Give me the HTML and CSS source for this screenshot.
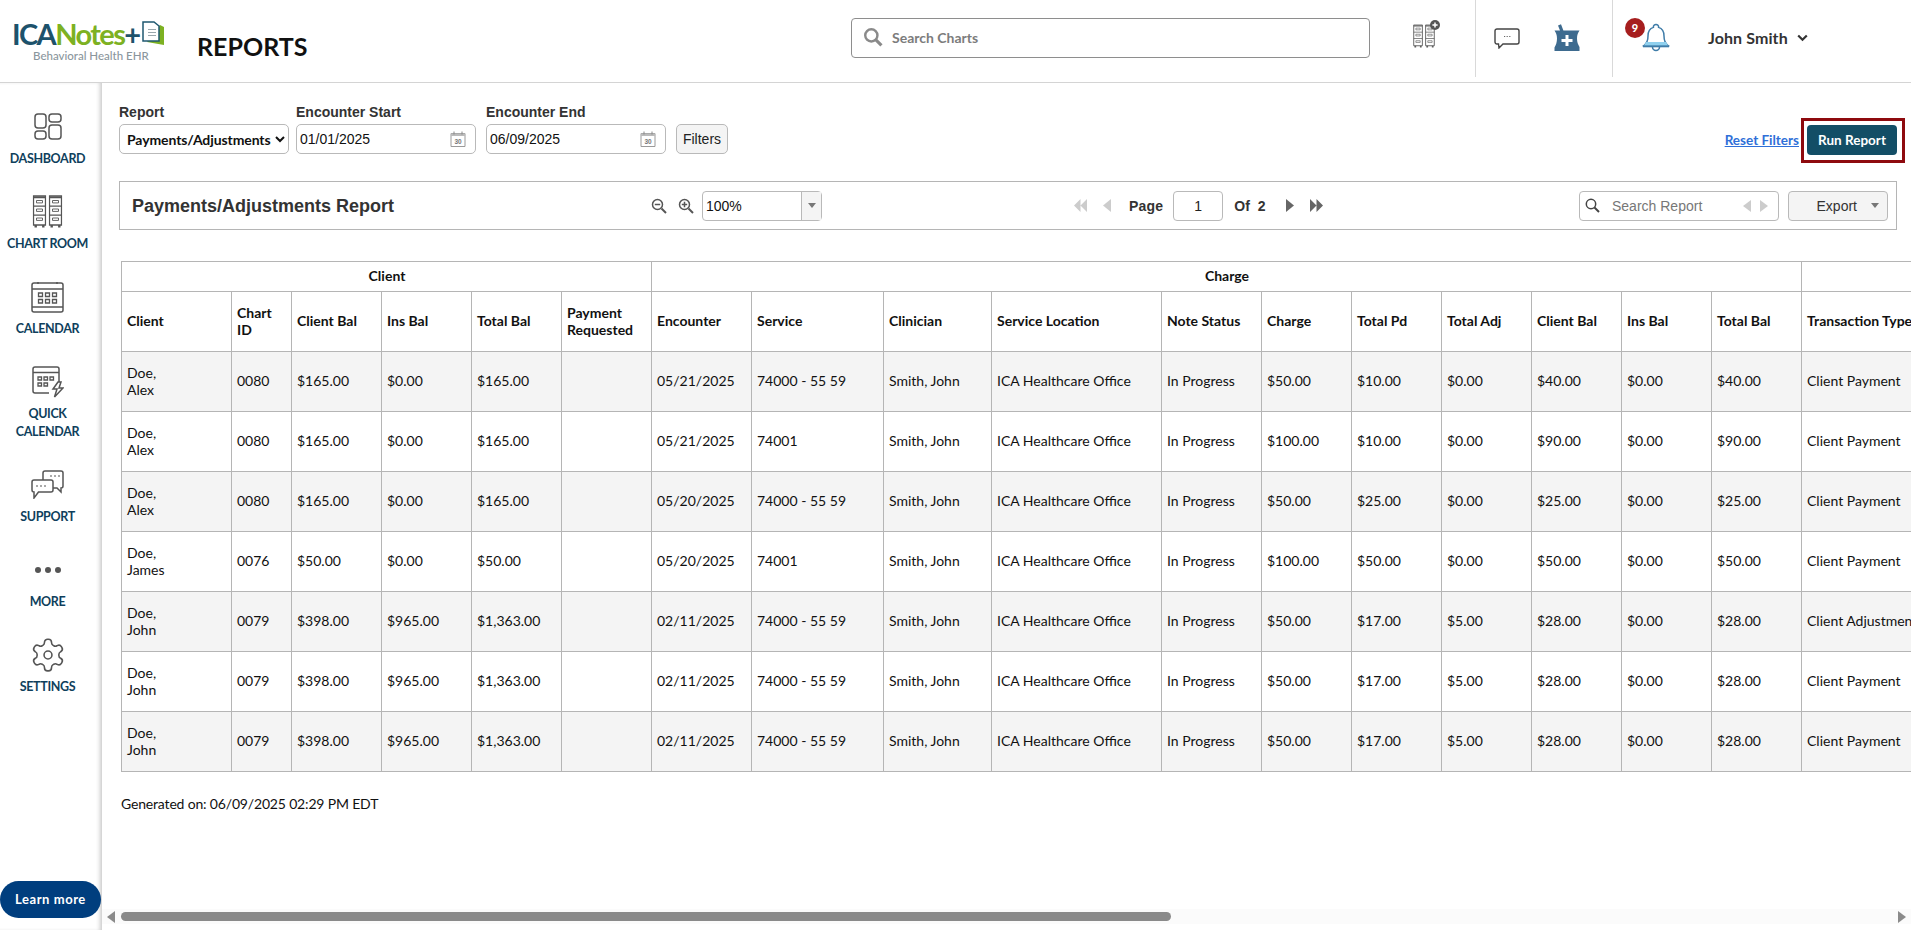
FILE: index.html
```html
<!DOCTYPE html>
<html lang="en">
<head>
<meta charset="utf-8">
<title>Reports</title>
<link rel="stylesheet" href="styles.css">
</head>
<body>
<svg class="defs" width="0" height="0" aria-hidden="true">
  <defs>
    <symbol id="cab" viewBox="0 0 14 33">
      <path d="M1 1h12v29H1z" fill="none" stroke="currentColor" stroke-width="1.3"/>
      <path d="M1 1.600h12v1.600H1zM1 10.500h12v1.200H1zM1 19.500h12v1.200H1zM2 30h2.400v2.400H2zM9.600 30H12v2.400H9.600z" fill="currentColor"/>
      <path d="M4 5.500h6v2.400H4zM4 14h6v2.400H4zM4 23h6v2.400H4z" fill="none" stroke="currentColor" stroke-width=".9"/>
    </symbol>
    <symbol id="cal30" viewBox="0 0 16 16">
      <path d="M1 2.500h14v13H1z" fill="#fff" stroke="#9a9a9a"/>
      <path d="M1 2.500h14v2.500H1z" fill="#bbb"/>
      <path d="M4 .5v3M12 .5v3" stroke="#888"/>
      <text x="8" y="13" text-anchor="middle" class="cal-num">30</text>
    </symbol>
  </defs>
</svg>

<header class="topbar">
  <div class="brand">
    <div class="logo">
      <div class="logo-row">
        <span class="logo-ica">ICA</span><span class="logo-notes">Notes</span><span class="logo-plus">+</span>
        <svg class="logo-doc" width="24" height="25" viewBox="0 0 24 25">
          <path d="M6 21l17 3V6l-4-2z" fill="#7db122"/>
          <path d="M2 1h11l5 4v15H2z" fill="#fff" stroke="#1f5870" stroke-width="1.500"/>
          <path d="M7 8.500h8M7 11.500h8M7 14.500h8" stroke="#9aa7ad" stroke-width="1.200"/>
        </svg>
      </div>
      <div class="logo-sub">Behavioral Health EHR</div>
    </div>
  </div>
  <div class="page-title">REPORTS</div>
  <div class="search-cell">
    <div class="chart-search">
      <svg width="20" height="20" viewBox="0 0 18 18"><circle cx="7.500" cy="7.500" r="5.500" fill="none" stroke="#8a8a8a" stroke-width="2.200"/><path d="M11.600 11.600l5 5" stroke="#8a8a8a" stroke-width="2.800"/></svg>
      <span>Search Charts</span>
    </div>
  </div>
  <div class="tool-cell tool-add">
    <div class="add-chart">
      <svg class="cab-pair" width="22" height="25" viewBox="0 0 24 27">
        <use href="#cab" x="0" y="0" width="11" height="26"/>
        <use href="#cab" x="13" y="0" width="11" height="26"/>
      </svg>
      <svg class="add-dot" width="10" height="10" viewBox="0 0 10 10"><circle cx="5" cy="5" r="5" fill="#555"/><path d="M2.400 5h5.200M5 2.400v5.200" stroke="#fff" stroke-width="1.500"/></svg>
    </div>
  </div>
  <div class="tool-cell tool-mid">
    <svg width="26" height="21" viewBox="0 0 26 21"><path d="M3 1h20a2 2 0 0 1 2 2v11a2 2 0 0 1-2 2H9l-4 4-.5-4H3a2 2 0 0 1-2-2V3a2 2 0 0 1 2-2z" fill="#fff" stroke="#444" stroke-width="1.400"/><path d="M10 8.500h1.200M12.600 8.500h1.200M15.200 8.500h1.200" stroke="#666"/></svg>
    <svg class="mortar" width="26" height="28" viewBox="0 0 26 28"><path d="M4 1.500l3-1.200 2.400 6.200h16.100c-1.500 2.200-2.500 4.500-2.500 8s1 6 2.500 8.500V27H.5v-3.500C2 21 3 18 3 14.500S2 8.700.5 6.500H6z" fill="#3e6b8f"/><path d="M13 11v11M7.500 16.500h11" stroke="#fff" stroke-width="3"/></svg>
  </div>
  <div class="tool-user">
    <div class="bell-wrap">
      <svg width="28" height="29" viewBox="0 0 28 29"><path d="M14 1.500a2.600 2.600 0 0 1 2.600 2.900c4 1.200 5.400 4.400 5.400 8.600 0 5 1.200 7.500 4 9.500H2c2.800-2 4-4.500 4-9.500 0-4.200 1.400-7.400 5.400-8.600A2.600 2.600 0 0 1 14 1.500z" fill="#fff" stroke="#3f7ca8" stroke-width="1.500"/><path d="M4 19h20l2 3.500H2z" fill="#8fd0ee"/><path d="M1 23.500h26" stroke="#3f7ca8" stroke-width="1.600"/><path d="M10.500 24a3.500 3.500 0 0 0 7 0" fill="none" stroke="#3f7ca8" stroke-width="1.500"/></svg>
      <span class="badge">9</span>
    </div>
    <span class="user-name">John Smith</span>
    <svg class="user-caret" width="11" height="8" viewBox="0 0 11 8"><path d="M1.200 1.500l4.300 4.300 4.300-4.300" fill="none" stroke="#333" stroke-width="2.200"/></svg>
  </div>
</header>

<div class="shell">
  <aside class="sidebar">
    <nav class="nav">
      <a class="nav-item">
        <span class="nav-icon">
          <svg width="28" height="27" viewBox="0 0 28 27" fill="none" stroke="#555" stroke-width="1.500"><rect x="1" y="1" width="11" height="14" rx="3"/><rect x="15" y="1" width="12" height="8" rx="3"/><rect x="1" y="18" width="11" height="8" rx="3"/><rect x="15" y="12" width="12" height="14" rx="3"/></svg>
        </span>
        <span class="nav-label">DASHBOARD</span>
      </a>
      <a class="nav-item">
        <span class="nav-icon cab-icon">
          <svg width="31" height="33" viewBox="0 0 30 33"><use href="#cab" x="0" y="0" width="14" height="33"/><use href="#cab" x="16" y="0" width="14" height="33"/></svg>
        </span>
        <span class="nav-label">CHART ROOM</span>
      </a>
      <a class="nav-item">
        <span class="nav-icon">
          <svg width="33" height="32" viewBox="0 0 33 32" fill="none" stroke="#555" stroke-width="1.500"><rect x="1" y="2" width="31" height="29" rx="2"/><path d="M1 8h31M1 26h31M7 1v2M26 1v2"/><path d="M7.500 12h4v3.500h-4zM14.500 12h4v3.500h-4zM21.500 12h4v3.500h-4zM7.500 18.500h4V22h-4zM14.500 18.500h4V22h-4zM21.500 18.500h4V22h-4z" stroke-width="1.300"/></svg>
        </span>
        <span class="nav-label">CALENDAR</span>
      </a>
      <a class="nav-item">
        <span class="nav-icon">
          <svg width="32" height="32" viewBox="0 0 32 32" fill="none" stroke="#555" stroke-width="1.500"><path d="M17 27H3a2 2 0 0 1-2-2V3a2 2 0 0 1 2-2h22a2 2 0 0 1 2 2v14"/><path d="M1 6.500h26"/><path d="M6 11h3.500v3H6zM12 11h3.500v3H12zM18 11h3.500v3H18zM6 17h3.500v3H6zM12 17h3.500v3H12z" stroke-width="1.300"/><path d="M26 16l-5 7h4l-2.500 8L31 22h-4l2-6z" fill="#fff"/></svg>
        </span>
        <span class="nav-label">QUICK<br>CALENDAR</span>
      </a>
      <a class="nav-item">
        <span class="nav-icon">
          <svg width="33" height="29" viewBox="0 0 33 29" fill="none" stroke="#555" stroke-width="1.500"><path d="M12 10V3a2 2 0 0 1 2-2h16a2 2 0 0 1 2 2v13a2 2 0 0 1-2 2v4l-4-4h-4"/><path d="M3 10h17a2 2 0 0 1 2 2v8a2 2 0 0 1-2 2H7.500L3 28v-6a2 2 0 0 1-2-2v-8a2 2 0 0 1 2-2z" fill="#fff"/><path d="M19 6h2M23 6h2M27 6h2M5 16h2M9 16h2M13 16h2" stroke-width="1.200"/></svg>
        </span>
        <span class="nav-label">SUPPORT</span>
      </a>
      <a class="nav-item">
        <span class="nav-icon">
          <svg width="30" height="8" viewBox="0 0 30 8" fill="#555"><circle cx="5" cy="4" r="3"/><circle cx="15" cy="4" r="3"/><circle cx="25" cy="4" r="3"/></svg>
        </span>
        <span class="nav-label">MORE</span>
      </a>
      <a class="nav-item">
        <span class="nav-icon">
          <svg width="38" height="38" viewBox="0 0 24 24" fill="none" stroke="#555" stroke-width="1"><path d="M12.220 2h-.44a2 2 0 0 0-2 2v.18a2 2 0 0 1-1 1.730l-.43.25a2 2 0 0 1-2 0l-.15-.08a2 2 0 0 0-2.730.73l-.22.38a2 2 0 0 0 .73 2.730l.15.1a2 2 0 0 1 1 1.720v.51a2 2 0 0 1-1 1.740l-.15.09a2 2 0 0 0-.73 2.730l.22.38a2 2 0 0 0 2.730.73l.15-.08a2 2 0 0 1 2 0l.43.25a2 2 0 0 1 1 1.730V20a2 2 0 0 0 2 2h.44a2 2 0 0 0 2-2v-.18a2 2 0 0 1 1-1.730l.43-.25a2 2 0 0 1 2 0l.15.08a2 2 0 0 0 2.730-.73l.22-.39a2 2 0 0 0-.73-2.730l-.15-.08a2 2 0 0 1-1-1.740v-.5a2 2 0 0 1 1-1.740l.15-.09a2 2 0 0 0 .73-2.730l-.22-.38a2 2 0 0 0-2.730-.73l-.15.08a2 2 0 0 1-2 0l-.43-.25a2 2 0 0 1-1-1.730V4a2 2 0 0 0-2-2z"/><circle cx="12" cy="12" r="2.500"/></svg>
        </span>
        <span class="nav-label">SETTINGS</span>
      </a>
    </nav>
    <a class="learn-more">Learn more</a>
  </aside>

  <main class="content">
    <div class="scroll-area">
      <div class="filters">
        <div class="field">
          <label class="field-label">Report</label>
          <select class="report-select"><option>Payments/Adjustments</option></select>
        </div>
        <div class="field">
          <label class="field-label">Encounter Start</label>
          <div class="date-box"><span>01/01/2025</span><svg width="16" height="16"><use href="#cal30"/></svg></div>
        </div>
        <div class="field field-end">
          <label class="field-label">Encounter End</label>
          <div class="date-box"><span>06/09/2025</span><svg width="16" height="16"><use href="#cal30"/></svg></div>
        </div>
        <button class="filters-btn">Filters</button>
        <div class="filter-actions">
          <a class="reset-link">Reset Filters</a>
          <div class="run-frame"><button class="run-btn">Run Report</button></div>
        </div>
      </div>

      <section class="viewer-bar">
        <h1 class="viewer-title">Payments/Adjustments Report</h1>
        <div class="zoom-tools">
          <svg width="16" height="16" viewBox="0 0 16 16" fill="none" stroke="#555"><circle cx="6.500" cy="6.500" r="5" stroke-width="1.500"/><path d="M3.800 6.500h5.400" stroke-width="1.500"/><path d="M10.500 10.500l4.500 4.500" stroke-width="2"/></svg>
          <svg width="16" height="16" viewBox="0 0 16 16" fill="none" stroke="#555"><circle cx="6.500" cy="6.500" r="5" stroke-width="1.500"/><path d="M3.800 6.500h5.400M6.500 3.800v5.400" stroke-width="1.500"/><path d="M10.500 10.500l4.500 4.500" stroke-width="2"/></svg>
          <div class="zoom-combo"><span class="zoom-val">100%</span><span class="zoom-drop"><i class="tri-down"></i></span></div>
        </div>
        <div class="pager">
          <svg class="pg-first" width="13" height="13" viewBox="0 0 13 13" fill="#ccc"><path d="M6.500 0v13L0 6.500zM13 0v13L6.500 6.500z"/></svg>
          <svg class="pg-prev" width="8" height="13" viewBox="0 0 8 13" fill="#ccc"><path d="M8 0v13L0 6.500z"/></svg>
          <span class="pg-label pg-page">Page</span>
          <span class="pg-input">1</span>
          <span class="pg-label pg-of">Of</span>
          <span class="pg-label pg-total">2</span>
          <svg class="pg-next" width="8" height="13" viewBox="0 0 8 13" fill="#666"><path d="M0 0v13l8-6.500z"/></svg>
          <svg class="pg-last" width="13" height="13" viewBox="0 0 13 13" fill="#666"><path d="M0 0v13l6.500-6.500zM6.500 0v13L13 6.500z"/></svg>
        </div>
        <div class="viewer-right">
          <div class="report-search">
            <svg width="15" height="15" viewBox="0 0 15 15" fill="none" stroke="#444"><circle cx="6" cy="6" r="4.700" stroke-width="1.500"/><path d="M9.500 9.500l4.500 4.500" stroke-width="2"/></svg>
            <span class="rs-text">Search Report</span>
            <svg width="8" height="12" viewBox="0 0 8 12" fill="#ccc"><path d="M8 0v12L0 6z"/></svg>
            <svg width="8" height="12" viewBox="0 0 8 12" fill="#ccc"><path d="M0 0v12l8-6z"/></svg>
          </div>
          <div class="export-btn"><span>Export</span><i class="tri-down"></i></div>
        </div>
      </section>

      <div class="table-wrap">
        <table class="report-table">
          <colgroup>
            <col class="w110"><col class="w60"><col class="w90"><col class="w90"><col class="w90"><col class="w90">
            <col class="w100"><col class="w132"><col class="w108"><col class="w170"><col class="w100"><col class="w90"><col class="w90"><col class="w90"><col class="w90"><col class="w90"><col class="w90">
            <col class="w150">
          </colgroup>
          <thead>
            <tr class="group-row"><th colspan="6">Client</th><th colspan="11">Charge</th><th></th></tr>
            <tr class="head-row">
              <th>Client</th><th>Chart<br>ID</th><th>Client Bal</th><th>Ins Bal</th><th>Total Bal</th><th>Payment<br>Requested</th>
              <th>Encounter</th><th>Service</th><th>Clinician</th><th>Service Location</th><th>Note Status</th><th>Charge</th><th>Total Pd</th><th>Total Adj</th><th>Client Bal</th><th>Ins Bal</th><th>Total Bal</th><th>Transaction Type</th>
            </tr>
          </thead>
          <tbody>
            <tr><td>Doe,<br>Alex</td><td>0080</td><td>$165.00</td><td>$0.00</td><td>$165.00</td><td></td><td>05/21/2025</td><td>74000 - 55 59</td><td>Smith, John</td><td>ICA Healthcare Office</td><td>In Progress</td><td>$50.00</td><td>$10.00</td><td>$0.00</td><td>$40.00</td><td>$0.00</td><td>$40.00</td><td>Client Payment</td></tr>
            <tr><td>Doe,<br>Alex</td><td>0080</td><td>$165.00</td><td>$0.00</td><td>$165.00</td><td></td><td>05/21/2025</td><td>74001</td><td>Smith, John</td><td>ICA Healthcare Office</td><td>In Progress</td><td>$100.00</td><td>$10.00</td><td>$0.00</td><td>$90.00</td><td>$0.00</td><td>$90.00</td><td>Client Payment</td></tr>
            <tr><td>Doe,<br>Alex</td><td>0080</td><td>$165.00</td><td>$0.00</td><td>$165.00</td><td></td><td>05/20/2025</td><td>74000 - 55 59</td><td>Smith, John</td><td>ICA Healthcare Office</td><td>In Progress</td><td>$50.00</td><td>$25.00</td><td>$0.00</td><td>$25.00</td><td>$0.00</td><td>$25.00</td><td>Client Payment</td></tr>
            <tr><td>Doe,<br>James</td><td>0076</td><td>$50.00</td><td>$0.00</td><td>$50.00</td><td></td><td>05/20/2025</td><td>74001</td><td>Smith, John</td><td>ICA Healthcare Office</td><td>In Progress</td><td>$100.00</td><td>$50.00</td><td>$0.00</td><td>$50.00</td><td>$0.00</td><td>$50.00</td><td>Client Payment</td></tr>
            <tr><td>Doe,<br>John</td><td>0079</td><td>$398.00</td><td>$965.00</td><td>$1,363.00</td><td></td><td>02/11/2025</td><td>74000 - 55 59</td><td>Smith, John</td><td>ICA Healthcare Office</td><td>In Progress</td><td>$50.00</td><td>$17.00</td><td>$5.00</td><td>$28.00</td><td>$0.00</td><td>$28.00</td><td>Client Adjustment</td></tr>
            <tr><td>Doe,<br>John</td><td>0079</td><td>$398.00</td><td>$965.00</td><td>$1,363.00</td><td></td><td>02/11/2025</td><td>74000 - 55 59</td><td>Smith, John</td><td>ICA Healthcare Office</td><td>In Progress</td><td>$50.00</td><td>$17.00</td><td>$5.00</td><td>$28.00</td><td>$0.00</td><td>$28.00</td><td>Client Payment</td></tr>
            <tr><td>Doe,<br>John</td><td>0079</td><td>$398.00</td><td>$965.00</td><td>$1,363.00</td><td></td><td>02/11/2025</td><td>74000 - 55 59</td><td>Smith, John</td><td>ICA Healthcare Office</td><td>In Progress</td><td>$50.00</td><td>$17.00</td><td>$5.00</td><td>$28.00</td><td>$0.00</td><td>$28.00</td><td>Client Payment</td></tr>
          </tbody>
        </table>
      </div>
      <p class="generated">Generated on: 06/09/2025 02:29 PM EDT</p>
    </div>
    <div class="hscroll">
      <svg width="8" height="12" viewBox="0 0 8 12" fill="#8a8a8a"><path d="M8 0v12L0 6z"/></svg>
      <div class="hscroll-track"><div class="hscroll-thumb"></div></div>
      <svg width="8" height="12" viewBox="0 0 8 12" fill="#8a8a8a"><path d="M0 0v12l8-6z"/></svg>
    </div>
  </main>
</div>
</body>
</html>
```
FILE: styles.css
```css
* { box-sizing: border-box; }
html, body { margin: 0; height: 930px; overflow: hidden; background: #fff; }
body { font-family: Lato, "Liberation Sans", sans-serif; color: #111; display: flex; flex-direction: column; }
.defs { position: absolute; }
.cal-num { font: bold 6.5px "Liberation Sans", sans-serif; fill: #777; }

/* top bar */
.topbar {
  height: 83px; flex: none; display: grid;
  grid-template-columns: 197px 654px 519px 106px 137px 1fr;
  border-bottom: 1px solid #d4d4d4;
}
.brand { padding: 21px 0 0 12px; }
.logo-row { display: flex; align-items: flex-start; height: 26px; line-height: 26px; font-size: 29px; font-weight: 700; letter-spacing: -1.6px; }
.logo-ica { color: #1d526b; }
.logo-notes { color: #7db122; }
.logo-plus { color: #1d526b; }
.logo-doc { margin-left: 1px; }
.logo-sub { margin: 1px 0 0 21px; font-size: 11.5px; line-height: 15px; font-weight: 500; color: #8b969d; white-space: nowrap; }
.page-title { padding-top: 31px; font-size: 25px; line-height: 30px; font-weight: 700; color: #111; }
.search-cell { padding-top: 18px; }
.chart-search { height: 40px; border: 1px solid #8e8e8e; border-radius: 4px; display: flex; align-items: center; gap: 9px; padding: 0 0 2px 11px; font-size: 14px; font-weight: 700; color: #7c7c7c; }
.tool-cell { height: 77px; border-right: 1px solid #d9d9d9; display: flex; align-items: center; }
.tool-add { justify-content: flex-start; padding-left: 43px; }
.add-chart { position: relative; width: 27px; height: 30px; padding-top: 4px; color: #5f5f5f; margin-top: -8px; }
.add-dot { position: absolute; right: 0; top: 0; }
.cab-pair { display: block; }
.tool-mid { padding-left: 18px; gap: 33px; }
.mortar { margin: -2px 0 0 1px; }
.tool-user { display: flex; align-items: center; height: 77px; padding-left: 29px; }
.bell-wrap { position: relative; width: 28px; height: 29px; margin-top: -2px; }
.badge { position: absolute; left: -17px; top: -5px; width: 20px; height: 20px; border-radius: 50%; background: #a61e1e; color: #fff; font-size: 11px; line-height: 20px; font-weight: 900; text-align: center; }
.user-name { margin: -2px 0 0 38px; font-size: 16px; font-weight: 700; color: #333; letter-spacing: .1px; }
.user-caret { margin: -2px 0 0 9px; }

/* shell */
.shell { flex: 1; display: flex; min-height: 0; }
.sidebar { width: 102px; flex: none; display: flex; flex-direction: column; padding: 20px 0 12px; box-shadow: inset -4px 0 4px -2px #c9c9c9; }
.nav { display: flex; flex-direction: column; gap: 20px; }
.nav-item { display: flex; flex-direction: column; align-items: center; padding-right: 7px; }
.nav-icon { height: 47px; display: flex; align-items: center; justify-content: center; color: #555; }
.nav-label { font-size: 12.5px; line-height: 18px; font-weight: 700; color: #0f3f5c; text-align: center; letter-spacing: -.35px; white-space: nowrap; }
.learn-more { margin-top: auto; width: 101px; height: 37px; border-radius: 19px; background: #003e7e; color: #fff; font-size: 13px; font-weight: 700; line-height: 37px; text-align: center; letter-spacing: .55px; }

/* content */
.content { flex: 1; min-width: 0; display: flex; flex-direction: column; padding-bottom: 6px; }
.scroll-area { flex: 1; min-height: 0; overflow: hidden; padding: 17px 14px 0 17px; }
.filters { display: flex; align-items: flex-end; height: 54px; gap: 7px; }
.field { display: flex; flex-direction: column; }
.field-end { margin-left: 3px; }
.field-label { font: bold 14px/24px "Liberation Sans", sans-serif; color: #333; height: 24px; }
.report-select { width: 170px; height: 30px; border: 1px solid #b9b9b9; border-radius: 5px; background: #fff; font: 700 14px Lato, sans-serif; letter-spacing: -.1px; color: #111; padding-left: 3px; }
.date-box { width: 180px; height: 30px; border: 1px solid #b9b9b9; border-radius: 5px; display: flex; align-items: center; justify-content: space-between; padding: 0 9px 0 3px; font: 14px "Liberation Sans", sans-serif; color: #111; }
.filters-btn { margin-left: 3px; width: 52px; height: 30px; border: 1px solid #b9b9b9; border-radius: 5px; background: #f4f4f4; font: 14px "Liberation Sans", sans-serif; color: #222; padding: 0; }
.filter-actions { margin-left: auto; display: flex; align-items: center; gap: 2px; margin-bottom: -1px; }
.reset-link { font-size: 13.5px; font-weight: 700; color: #2f6fd8; text-decoration: underline; }
.run-frame { border: 3px solid #8e0a0e; padding: 4px 5px 5px 3px; margin: -7px -8px -8px 0; }
.run-btn { display: block; width: 90px; height: 30px; border: 0; border-radius: 4px; background: #134e66; color: #fff; font: 700 13.5px Lato, sans-serif; padding: 0; }

.viewer-bar { margin-top: 27px; height: 49px; border: 1px solid #b5b5b5; display: grid; grid-template-columns: 519px 423px auto 1fr; align-items: center; padding-left: 12px; }
.viewer-title { margin: 2px 0 0; font: bold 18px "Liberation Sans", sans-serif; color: #333; white-space: nowrap; }
.zoom-tools { display: flex; align-items: center; gap: 11px; }
.zoom-combo { display: flex; width: 120px; height: 30px; border: 1px solid #b9b9b9; border-radius: 4px; margin-left: -3px; }
.zoom-val { flex: 1; padding-left: 3px; font: 14px/28px "Liberation Sans", sans-serif; color: #111; }
.zoom-drop { width: 20px; background: #f4f4f4; border-left: 1px solid #b9b9b9; display: flex; align-items: center; justify-content: center; }
.tri-down { display: block; width: 0; height: 0; border: 4px solid transparent; border-top: 5px solid #777; border-bottom: 0; }
.pager { display: flex; align-items: center; font: bold 14px "Liberation Sans", sans-serif; color: #333; }
.pg-prev { margin-left: 16px; }
.pg-page { margin-left: 18px; letter-spacing: .2px; }
.pg-input { width: 50px; height: 30px; margin-left: 10px; border: 1px solid #b9b9b9; border-radius: 4px; text-align: center; line-height: 28px; font-weight: 400; color: #222; }
.pg-of { margin-left: 11px; }
.pg-total { margin-left: 8px; }
.pg-next { margin-left: 20px; }
.pg-last { margin-left: 16px; }
.viewer-right { display: flex; gap: 9px; justify-content: flex-end; padding-right: 8px; }
.report-search { width: 200px; height: 30px; border: 1px solid #b9b9b9; border-radius: 4px; display: flex; align-items: center; padding: 0 10px 0 5px; gap: 9px; font: 14px "Liberation Sans", sans-serif; color: #777; }
.rs-text { flex: 1; margin-left: 3px; white-space: nowrap; }
.export-btn { width: 100px; height: 30px; border: 1px solid #b9b9b9; border-radius: 4px; background: #f4f4f4; display: flex; align-items: center; justify-content: flex-end; gap: 14px; padding-right: 8px; font: 14px "Liberation Sans", sans-serif; color: #333; }

.table-wrap { margin: 31px -14px 0 2px; overflow: hidden; }
.report-table { border-collapse: collapse; table-layout: fixed; width: 1830px; font-size: 14px; line-height: 17px; }
.w60 { width: 60px; } .w90 { width: 90px; } .w100 { width: 100px; } .w108 { width: 108px; }
.w110 { width: 110px; } .w132 { width: 132px; } .w150 { width: 150px; } .w170 { width: 170px; }
.report-table th, .report-table td { border: 1px solid #b5b5b5; padding: 0 4px 2px 5px; text-align: left; vertical-align: middle; white-space: nowrap; overflow: hidden; color: #111; }
.report-table th { font-weight: 700; }
.group-row { height: 30px; }
.group-row th { text-align: center; }
.head-row { height: 60px; }
.report-table tbody tr { height: 60px; }
.report-table tbody tr:nth-child(odd) td { background: #f4f4f4; }
.generated { margin: 23px 0 0 2px; font-size: 14px; line-height: 18px; letter-spacing: -.17px; color: #111; }

.hscroll { height: 15px; flex: none; background: #fbfbfb; display: flex; align-items: center; padding: 0 5px; gap: 6px; }
.hscroll-track { flex: 1; height: 9px; }
.hscroll-thumb { width: 1050px; height: 9px; border-radius: 5px; background: #8a8a8a; }
```
